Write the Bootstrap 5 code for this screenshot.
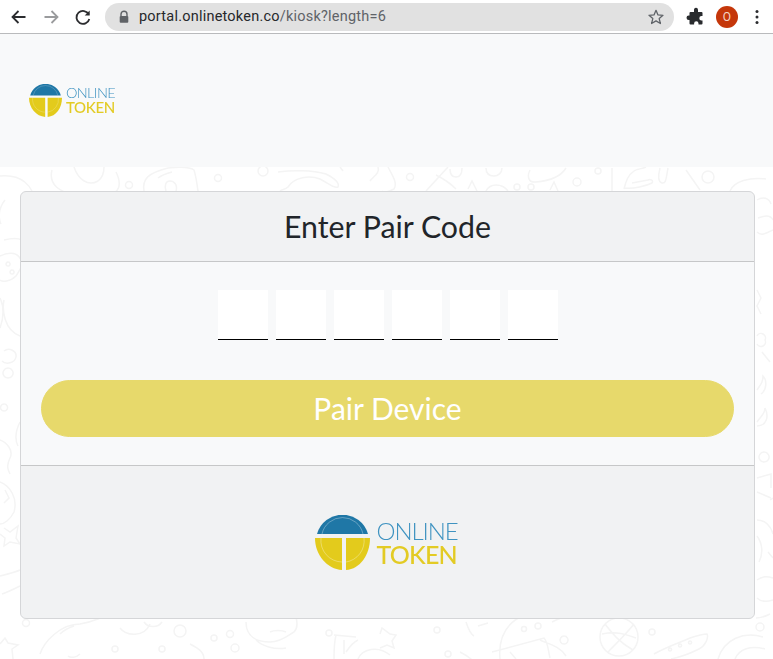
<!DOCTYPE html>
<html lang="en">
<head>
    <meta charset="UTF-8">
    <meta name="viewport" content="width=device-width, initial-scale=1.0">
    <title>Online Token</title>
    <link href="https://cdn.jsdelivr.net/npm/bootstrap@5.3.0/dist/css/bootstrap.min.css" rel="stylesheet">
    <script src="https://cdn.jsdelivr.net/npm/bootstrap@5.3.0/dist/js/bootstrap.bundle.min.js"></script>
    <style>
        html, body { height: 659px; overflow: hidden; }
        body { background: #fff; font-family: "Lato", sans-serif; color: #212529; position: relative; }

        /* chrome toolbar */
        .chrome-bar { height: 34px; background: #fff; border-bottom: 1px solid #b9babc; padding-left: 9px; position: relative; }
        .tool-btn { width: 20px; height: 20px; flex: none; }
        .tool-gap { margin-left: 12px; }
        .url-pill { width: 569px; height: 28px; margin-left: 12px; background: #e1e1e1; border-radius: 14px; padding-left: 13px; padding-right: 9px; font-family: "Roboto", sans-serif; font-size: 14.5px; color: #5f6368; letter-spacing: .22px; }
        .url-text { margin-left: 9px; }
        .url-host { color: #26282b; }
        .avatar-dot { width: 22px; height: 22px; border-radius: 50%; background: #c5370a; color: #f5d5c8; font-family: "Roboto", sans-serif; font-size: 12px; margin-left: 10px; }
        .menu-dots { margin-left: 17px; }

        /* page */
        .doodles { position: absolute; left: 0; top: 0; z-index: -1; }
        .top-nav { height: 133px; padding: 0 0 0 29px; background: #f8f9fa; position: relative; }

        /* logo: mark + two lines of real text, big and small */
        .logo-wrap { display: flex; align-items: flex-start; filter: blur(.4px); }
        .logo-mark { width: 55px; height: 55px; display: block; flex: none; }
        .logo-words { margin-left: 7px; padding-top: 4px; }
        .logo-a, .logo-b { display: block; line-height: 23.5px; white-space: nowrap; }
        .logo-a { font-size: 24px; font-weight: 300; color: #3f93c1; letter-spacing: -1.1px; }
        .logo-b { font-size: 25px; font-weight: 500; color: #e3cb24; letter-spacing: -.8px; }
        .logo-sm .logo-mark { width: 33px; height: 33px; }
        .logo-sm .logo-words { margin-left: 4px; padding-top: 2px; }
        .logo-sm .logo-a, .logo-sm .logo-b { line-height: 14px; }
        .logo-sm .logo-a { font-size: 14.5px; letter-spacing: -.65px; }
        .logo-sm .logo-b { font-size: 15px; letter-spacing: -.35px; }
        .logo-lg { margin-right: 3px; }

        .pair-card { margin: 24px 18px 0 20px; height: 428px; background: #f8f9fa; border-color: #d5d6d8; }
        .pair-head { height: 70px; font-size: 30.3px; line-height: 69px; padding: 0; text-align: center; }
        .pair-body { height: 203px; flex: none; padding: 28px 20px 0; }
        .code-box { width: 50px; height: 50px; border: 0; border-bottom: 1px solid #000; background: #fff; border-radius: 0; outline: 0; padding: 0; text-align: center; }
        .code-row { gap: 8px; margin-bottom: 40px; }
        .pair-btn { width: 100%; height: 57px; background: #e7d96b; border-color: #e7d96b; border-radius: 28.5px; color: #fff; font-size: 30px; font-weight: 400; line-height: 1; padding: 0 0 2px; }
        .pair-foot { flex: 1; padding: 49px 0 0; }
    </style>
</head>
<body>
    <!-- doodle wallpaper behind the page, only the edges show -->
    <svg class="doodles" width="773" height="659" viewBox="0 0 773 659" fill="none" stroke="#f4f4f4" stroke-width="1.500">
        <path d="M0 176c20-2 34 8 36 30M52 170c-4 16 10 22 20 24 12 2 26 8 34 2 14-2 16-12 10-24M74 167c4 12 14 20 24 14 4-3 6-8 6-14"/>
        <circle cx="129" cy="185" r="3.500"/><circle cx="218" cy="178" r="3.500"/>
        <path d="M144 191c-2-12 4-18 24-23 10-1 22-1 26 2 2 6 3 14 4 21M158 178c4-3 10-5 14-6M166 191c-2-6 0-10 4-10s8 4 6 10"/>
        <circle cx="263" cy="171" r="5"/>
        <path d="M278 172c14-2 34-2 48 2 6 3 14 8 12 13-4 2-10-4-18-8-10-4-26-2-32 8-3 3-6 2-8 4"/>
        <path d="M340 167l3 4 M370 181c4-5 10-8 8-14M388 167c4 8 10 16 6 22-4 2-10 4-12 2"/>
        <circle cx="410" cy="177" r="3.500"/>
        <path d="M426 191l22-24M436 175c8 4 14 8 20 14M450 169c0 5 2 8 6 8s6-4 6-9"/><path d="M486 168c0 6 4 8 8 8s8-3 8-8M468 189l4-8 5 10M486 191c4-8 16-8 22 0"/>
        <circle cx="517" cy="187" r="3"/><circle cx="531" cy="187" r="3"/><path d="M550 190l4-8 4 9"/>
        <path d="M530 170c-3 6-2 13 6 12 12-1 24-4 30-14"/>
        <circle cx="577" cy="182" r="4"/><circle cx="598" cy="171" r="3"/>
        <path d="M612 168v23M624 189c2-8 4-14 10-18 2-2 8-2 12-4M624 188c10 1 22-2 28-5 2-3-2-4-4-3l-16 3M660 168c-2 8-2 14 2 15 4 1 4-4 6-15"/>
        <path d="M686 170l14 20"/><circle cx="708" cy="177" r="6"/>
        <path d="M730 191c4-10 20-14 36-12"/>
        <path d="M5 200c-8 10-6 20-4 24M4 240c8-2 14-2 18 0M0 256c8-4 16-4 20 2s0 12-4 18c-6 6-14 6-16 4M8 262a2 2 0 1 0 .1 0M12 270a2 2 0 1 0 .1 0"/>
        <path d="M0 298c4 8 4 20 0 30M4 300c-2 10 0 30 16 36M4 351c5-4 13 0 12 6s-10 8-14 4M8 368a5 5 0 1 0 .1 0M4 404a3.500 3.500 0 1 0 .1 0"/>
        <path d="M20 422c-4 8-6 16-2 24M0 440c6 2 14 10 10 18s-2 12 0 16M0 482c10 4 18 16 14 30-4 8-10 12-14 12M5 490l4 8-5 5"/>
        <path d="M4 528l6 4 8-6-2 12 4 6-10-2-6 4 1-8-5-4M0 576c8-2 16-4 20-6M2 594c6-2 14-6 18-8"/>
        <path d="M757 200c6-4 12-2 14 4M758 218c6-2 12-4 15 2M757 232c4 4 8 2 16-2"/>
        <path d="M757 290l4 8-4 8 4 8M757 336a4 4 0 0 1 8 4 4 4 0 0 1-8 4M762 352l8 10M757 390c4-6 6-8 6-14 4 4 4 14-2 18M757 422c4-6 8-8 8-14 4 8 2 18-8 18M764 452a5 5 0 1 0 .1 0M757 478l14-4v14M757 492l14 6M770 500l3-2"/>
        <path d="M757 520c8 0 14 6 16 14M757 536c6 8 6 18 2 26M768 552l5 6M757 580c6-4 10-4 16-2M757 598c4 4 10 4 16 2M770 614c-4 2-8 4-14 4"/>
        <path d="M0 644l5-6 3 5 10 2-6 4 1 10M40 654c4-12 20-30 40-30 12-2 28-8 28-12M60 634c4-4 8-6 14-8M68 656c2 2 8 2 12-2M120 628c6 8 24 10 30-4M144 622c4 6 14 6 18 0"/>
        <circle cx="26" cy="623" r="3.500"/><circle cx="180" cy="631" r="6"/><circle cx="214" cy="638" r="3"/><circle cx="230" cy="634" r="3.500"/><circle cx="235" cy="648" r="4"/><circle cx="162" cy="649" r="3"/><circle cx="115" cy="649" r="3"/>
        <path d="M190 644c8 4 14 8 14 15M246 622c0 14 10 20 24 20 12 0 20-8 24-10 4-4 4-10 0-22M256 640c6 6 18 10 30 8M270 632c4-2 12-2 16 0"/>
        <path d="M334 635l22 2M336 635c-2 8-2 16-2 24M358 640c-4 2-8 6-12 12M380 634l2-6 8 6 6 1-4 6 2 7-7-3-7 3"/><circle cx="329" cy="633" r="3"/>
        <path d="M358 659c4-10 20-14 32-4M344 640v14"/><circle cx="437" cy="630" r="3"/><circle cx="448" cy="654" r="3"/>
        <path d="M466 622c2 6 4 12 8 14M460 652c4 2 8 4 12 8M478 626l10-3"/>
        <path d="M500 659c-2-22 6-36 24-44M492 652l52-14c4 4 4 12 6 20M510 652l6 7M540 640c8 4 20 6 26 16"/>
        <circle cx="524" cy="629" r="2.500"/><circle cx="538" cy="626" r="3"/>
        <path d="M552 622c4-2 8-4 10-4M564 636a4 4 0 1 0 .1 0"/>
        <circle cx="619" cy="637" r="19"/><path d="M605 624c8 10 14 18 28 26M634 624c-8 10-16 18-26 28M602 634c10-2 18-2 34 4"/>
        <circle cx="652" cy="632" r="3"/>
        <path d="M654 654c10-6 22-10 36-16 6-2 14-4 17-4 2 4-2 12-8 15-8 4-18 8-28 10M670 648a1.500 1.500 0 1 0 .1 0M680 644a1.500 1.500 0 1 0 .1 0M690 641a1.500 1.500 0 1 0 .1 0"/>
        <path d="M718 659c6-20 26-28 45-22M735 659c4-10 16-14 30-10"/><circle cx="760" cy="627" r="4"/>
    </svg>

    <div class="chrome-bar d-flex align-items-center">
        <svg class="tool-btn" viewBox="0 0 20 20" fill="none" stroke="#2b2c2f" stroke-width="1.800"><path d="M16.500 10H3.500M9.500 4l-6 6 6 6"/></svg>
        <svg class="tool-btn tool-gap" viewBox="0 0 20 20" fill="none" stroke="#9a9b9d" stroke-width="1.800"><path d="M3.500 10h13M10.500 4l6 6-6 6"/></svg>
        <svg class="tool-btn tool-gap" viewBox="0 0 20 20" fill="none" stroke="#2b2c2f" stroke-width="1.800"><path d="M15.800 7.500A6.500 6.500 0 1 0 16.300 12"/><path d="M16.700 3.500v5h-5z" fill="#2b2c2f" stroke="none"/></svg>
        <div class="url-pill d-flex align-items-center">
            <svg width="12" height="14" viewBox="0 0 12 14"><path d="M3 6V4.200a3 3 0 0 1 6 0V6" fill="none" stroke="#606367" stroke-width="1.400"/><rect x="1.700" y="6" width="8.600" height="6.800" rx="1" fill="#606367"/></svg>
            <span class="url-text flex-grow-1"><span class="url-host">portal.onlinetoken.co</span>/kiosk?length=6</span>
            <svg width="18" height="18" viewBox="0 0 18 18" fill="none" stroke="#5f6368" stroke-width="1.300"><path d="M9 2.300l2 4.600 5 .4-3.800 3.300 1.200 4.900L9 12.900l-4.400 2.600 1.200-4.900L2 7.300l5-.4z" stroke-linejoin="round"/></svg>
        </div>
        <svg class="tool-btn tool-gap" viewBox="0 0 20 20" fill="#292b2e"><path d="M8 2.500a2 2 0 0 1 4 0.500V5h3.500a1 1 0 0 1 1 1v3h-1a2.200 2.200 0 0 0 0 4.400h1v3.100a1 1 0 0 1-1 1h-3v-1a2.200 2.200 0 0 0-4.400 0v1H4.500a1 1 0 0 1-1-1v-3.500H2.800a2.300 2.300 0 0 1 0-4.600h.7V6a1 1 0 0 1 1-1H8z"/></svg>
        <div class="avatar-dot d-flex align-items-center justify-content-center">O</div>
        <svg class="menu-dots" width="4" height="16" viewBox="0 0 4 16" fill="#2b2c2f"><circle cx="2" cy="2.500" r="1.500"/><circle cx="2" cy="8" r="1.500"/><circle cx="2" cy="13.500" r="1.500"/></svg>
    </div>

    <nav class="navbar top-nav align-items-center">
        <div class="logo-wrap logo-sm">
            <svg class="logo-mark" viewBox="0 0 55 55">
                <path d="M2 19A26.500 26.500 0 0 1 53 19z" fill="#1f77a6"/>
                <path d="M0 23H27V55C12 54 0 40 0 23z" fill="#e3cb1c"/>
                <path d="M31 23H55C55 40 45 54 31 55z" fill="#e3cb1c"/>
                <path d="M7 19A21 21 0 0 1 48 19M6 23A21.500 21.500 0 0 0 27 47M31 47A21.500 21.500 0 0 0 49 23" fill="none" stroke="#fff" stroke-opacity=".4" stroke-width=".8"/>
            </svg>
            <div class="logo-words"><span class="logo-a">ONLINE</span><span class="logo-b">TOKEN</span></div>
        </div>
    </nav>

    <div class="card pair-card">
        <div class="card-header pair-head">Enter Pair Code</div>
        <div class="card-body pair-body">
            <div class="d-flex justify-content-center code-row">
                <input class="code-box" type="text" maxlength="1">
                <input class="code-box" type="text" maxlength="1">
                <input class="code-box" type="text" maxlength="1">
                <input class="code-box" type="text" maxlength="1">
                <input class="code-box" type="text" maxlength="1">
                <input class="code-box" type="text" maxlength="1">
            </div>
            <button type="button" class="btn pair-btn">Pair Device</button>
        </div>
        <div class="card-footer pair-foot d-flex justify-content-center">
            <div class="logo-wrap logo-lg">
                <svg class="logo-mark" viewBox="0 0 55 55">
                    <path d="M2 19A26.500 26.500 0 0 1 53 19z" fill="#1f77a6"/>
                    <path d="M0 23H27V55C12 54 0 40 0 23z" fill="#e3cb1c"/>
                    <path d="M31 23H55C55 40 45 54 31 55z" fill="#e3cb1c"/>
                    <path d="M7 19A21 21 0 0 1 48 19M6 23A21.500 21.500 0 0 0 27 47M31 47A21.500 21.500 0 0 0 49 23" fill="none" stroke="#fff" stroke-opacity=".4" stroke-width=".8"/>
                </svg>
                <div class="logo-words"><span class="logo-a">ONLINE</span><span class="logo-b">TOKEN</span></div>
            </div>
        </div>
    </div>
</body>
</html>
